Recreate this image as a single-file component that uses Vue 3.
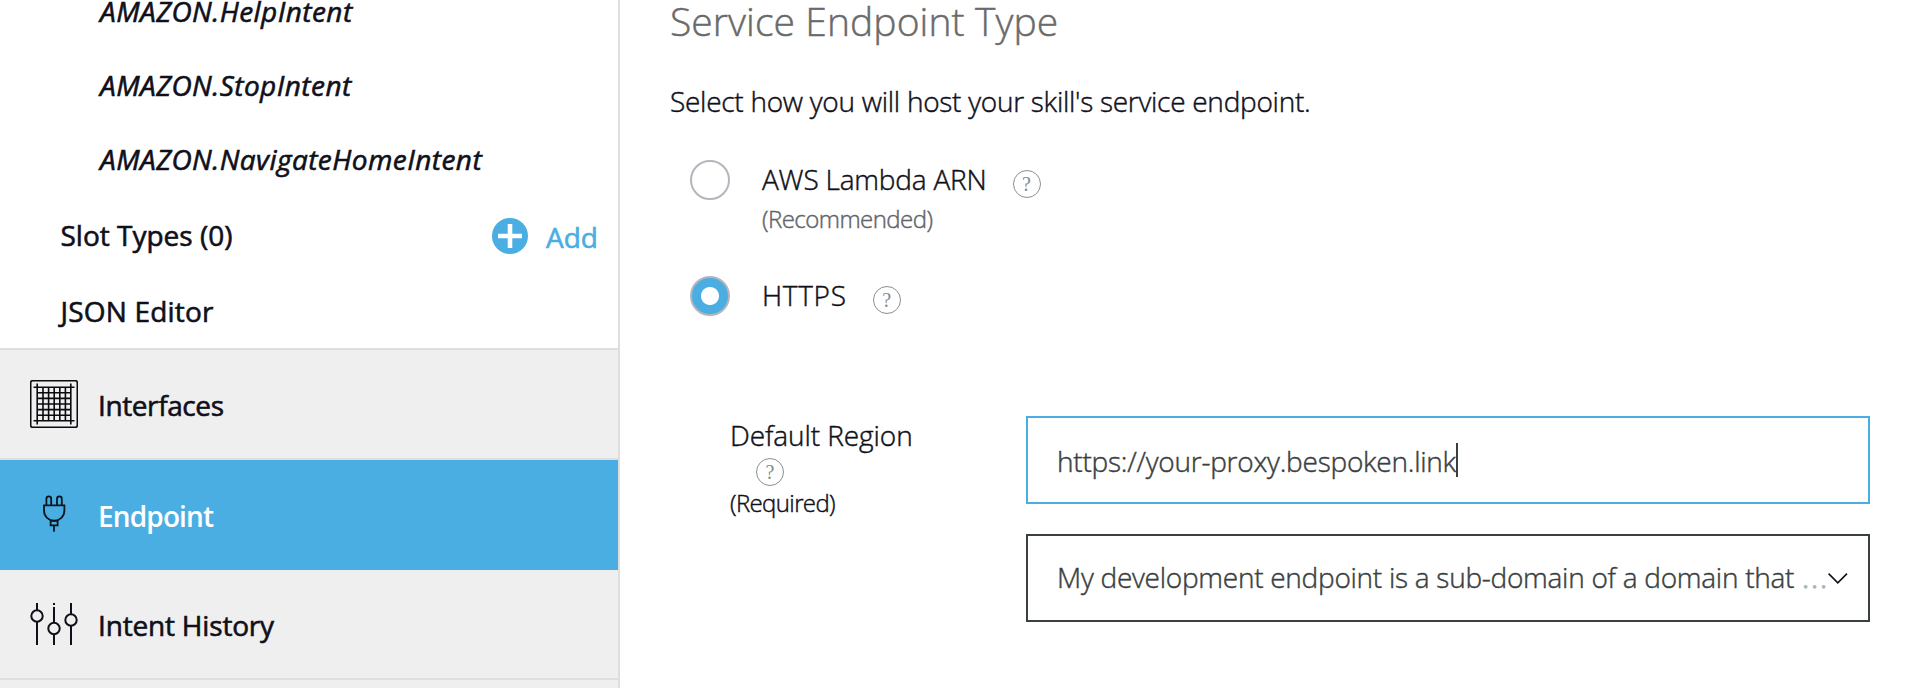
<script setup>
const intents = ['AMAZON.HelpIntent', 'AMAZON.StopIntent', 'AMAZON.NavigateHomeIntent']
const gridLines = [43, 48.6, 54.2, 59.8, 65.4]
</script>

<template>
  <div class="page">
    <aside class="sidebar">
      <div class="tree">
        <div v-for="name in intents" :key="name" class="row intent">{{ name }}</div>
        <div class="row slots">
          <span>Slot Types (0)</span>
          <span class="add">
            <svg width="36" height="36" viewBox="0 0 36 36"><circle cx="18" cy="18" r="18" fill="#4aaee3" /><path d="M18 6v24M6 18h24" stroke="#fff" stroke-width="4.6" /></svg>
            <span class="add-label">Add</span>
          </span>
        </div>
        <div class="row json">JSON Editor</div>
      </div>
      <nav>
        <div class="item interfaces">
          <svg class="icon" width="48" height="48" viewBox="30 380 48 48" fill="none" stroke="#0b0b0f" stroke-width="1.6">
            <rect x="30.7" y="380.7" width="46.6" height="46.6" rx="2" />
            <path d="M33.5 387.2h41M33.5 420.8h41M37.2 383.5v41M70.8 383.5v41" />
            <path v-for="p in gridLines" :key="p" :d="`M${p} 387v34M37 ${p + 349.8}h34`" />
          </svg>
          <span>Interfaces</span>
        </div>
        <div class="item active">
          <svg class="icon" width="48" height="48" viewBox="30 491 48 48" fill="none" stroke="#0b1620" stroke-width="1.8">
            <path d="M46.4 505v-6.2q0-2.4 2.4-2.4t2.4 2.4v6.2M57 505v-6.2q0-2.4 2.4-2.4t2.4 2.4v6.2" />
            <path d="M44 505.4h20.4v5.2c0 6-4.6 10-10.2 10S44 516.6 44 510.6z" />
            <path d="M50.6 520.8h7v4.5h-7zM54 525.3v6.4" />
          </svg>
          <span>Endpoint</span>
        </div>
        <div class="item history">
          <svg class="icon" width="48" height="48" viewBox="30 600 48 48" fill="none" stroke="#10101a" stroke-width="2">
            <path d="M37 603v7M37 622v23M54 603v2M54 607v16M54 634.5v10.5M71 603v11M71 626v19" />
            <circle cx="37" cy="616" r="5.7" /><circle cx="54" cy="628.5" r="5.7" /><circle cx="71" cy="620" r="5.7" />
          </svg>
          <span>Intent History</span>
        </div>
        <div class="item next"></div>
      </nav>
    </aside>

    <main class="main">
      <h2>Service Endpoint Type</h2>
      <p class="lead">Select how you will host your skill's service endpoint.</p>
      <div class="option">
        <span class="radio"></span>
        <div>
          <div class="option-line"><span class="arn">AWS Lambda ARN</span><span class="help">?</span></div>
          <div class="hint">(Recommended)</div>
        </div>
      </div>
      <div class="option second">
        <span class="radio on"></span>
        <div class="option-line"><span class="https">HTTPS</span><span class="help">?</span></div>
      </div>
      <div class="region">
        <div class="region-label">
          <div>Default Region</div>
          <span class="help">?</span>
          <div class="required">(Required)</div>
        </div>
        <div class="fields">
          <div class="field focus"><span class="value">https://your-proxy.bespoken.link</span><span class="caret"></span></div>
          <div class="field select">
            <span class="value">My development endpoint is a sub-domain of a domain that</span>
            <span class="dots">...</span>
            <svg class="chevron" width="20" height="11" viewBox="0 0 20 11" fill="none" stroke="#10101a" stroke-width="1.6"><path d="M.6.6l9.2 9.2L19 .6" /></svg>
          </div>
        </div>
      </div>
    </main>
  </div>
</template>

<style scoped>
.page { display: flex; height: 688px; overflow: hidden; background: #fff; color: #10101a; font-family: "Open Sans", "Noto Sans", sans-serif; font-size: 28px; font-weight: 300; white-space: nowrap; -webkit-text-stroke: .45px; }
.sidebar { box-sizing: border-box; width: 620px; flex: none; border-right: 2px solid #dedede; font-weight: 500; -webkit-text-stroke: .6px; }
.tree { height: 348px; display: flex; flex-direction: column; justify-content: flex-end; }
.row { flex: none; height: 74px; line-height: 74px; padding-left: 60.5px; }
.intent { padding-left: 100px; font-style: italic; letter-spacing: .44px; }
.slots { height: 78px; line-height: 78px; display: flex; justify-content: space-between; padding-right: 20px; }
.add { display: flex; align-items: center; gap: 18px; color: #4aaee3; }
.add svg { margin-top: 2px; }
.add-label { padding-top: 4px; }
.json { letter-spacing: .2px; }
.item { box-sizing: border-box; height: 110px; display: flex; align-items: center; gap: 20px; padding-left: 30px; background: #efefef; border-top: 2px solid #dedede; }
.item span { padding-top: 2px; }
.interfaces { letter-spacing: -.4px; }
.active { height: 112px; background: #4aaee3; color: #fff; font-weight: 600; letter-spacing: -.85px; -webkit-text-stroke: 0; }
.history { height: 108px; border-top: 0; letter-spacing: -.18px; }
.next { height: 12px; }
.main { flex: 1; padding-left: 50px; }
h2 { margin: 0; height: 42px; line-height: 42px; font-size: 39px; font-weight: 300; color: #6a6a6a; letter-spacing: .08px; }
.lead { margin: 39px 0 0; height: 40px; line-height: 40px; letter-spacing: -.27px; }
.option { display: flex; gap: 32px; margin: 39px 0 0 20px; height: 76px; }
.option.second { margin-top: 40px; }
.radio { box-sizing: border-box; flex: none; width: 40px; height: 40px; border-radius: 50%; border: 2px solid #b5b5bd; }
.radio.on { background: radial-gradient(circle, #fff 8.5px, #4aaee3 9.5px); }
.option-line { display: flex; height: 40px; line-height: 38px; }
.arn { letter-spacing: -.2px; }
.https { letter-spacing: .7px; }
.help { box-sizing: border-box; width: 28px; height: 28px; margin: 10px 0 0 26px; border: 1.5px solid #87928f; border-radius: 50%; text-align: center; font: 20px/26px "Liberation Serif", serif; color: #7f8c89; -webkit-text-stroke: 0; }
.hint { font-size: 24px; line-height: 38px; color: #64646c; letter-spacing: -.54px; }
.region { display: flex; margin: 64px 54px 0 60px; }
.region-label { width: 296px; line-height: 40px; }
.region-label > div:first-child { height: 40px; line-height: 38px; letter-spacing: -.08px; }
.region-label .help { display: block; margin: 2px 0 0 26px; }
.region-label .required { font-size: 24px; line-height: 34px; letter-spacing: -.62px; }
.fields { flex: 1; display: flex; flex-direction: column; gap: 30px; }
.field { box-sizing: border-box; height: 88px; border: 2px solid #3a3f3f; padding-left: 29px; display: flex; align-items: center; color: #3a3f3f; }
.focus { border-color: #4aaee3; }
.focus .value { padding-top: 2px; letter-spacing: -.25px; }
.caret { width: 2px; height: 34px; background: #3a3f3f; }
.select .value { padding-bottom: 2px; letter-spacing: -.27px; }
.dots { padding-bottom: 2px; color: #aab7b5; margin-left: 8px; letter-spacing: 2.4px; -webkit-text-stroke: 1.3px; }
.chevron { margin-left: -1px; }
</style>
